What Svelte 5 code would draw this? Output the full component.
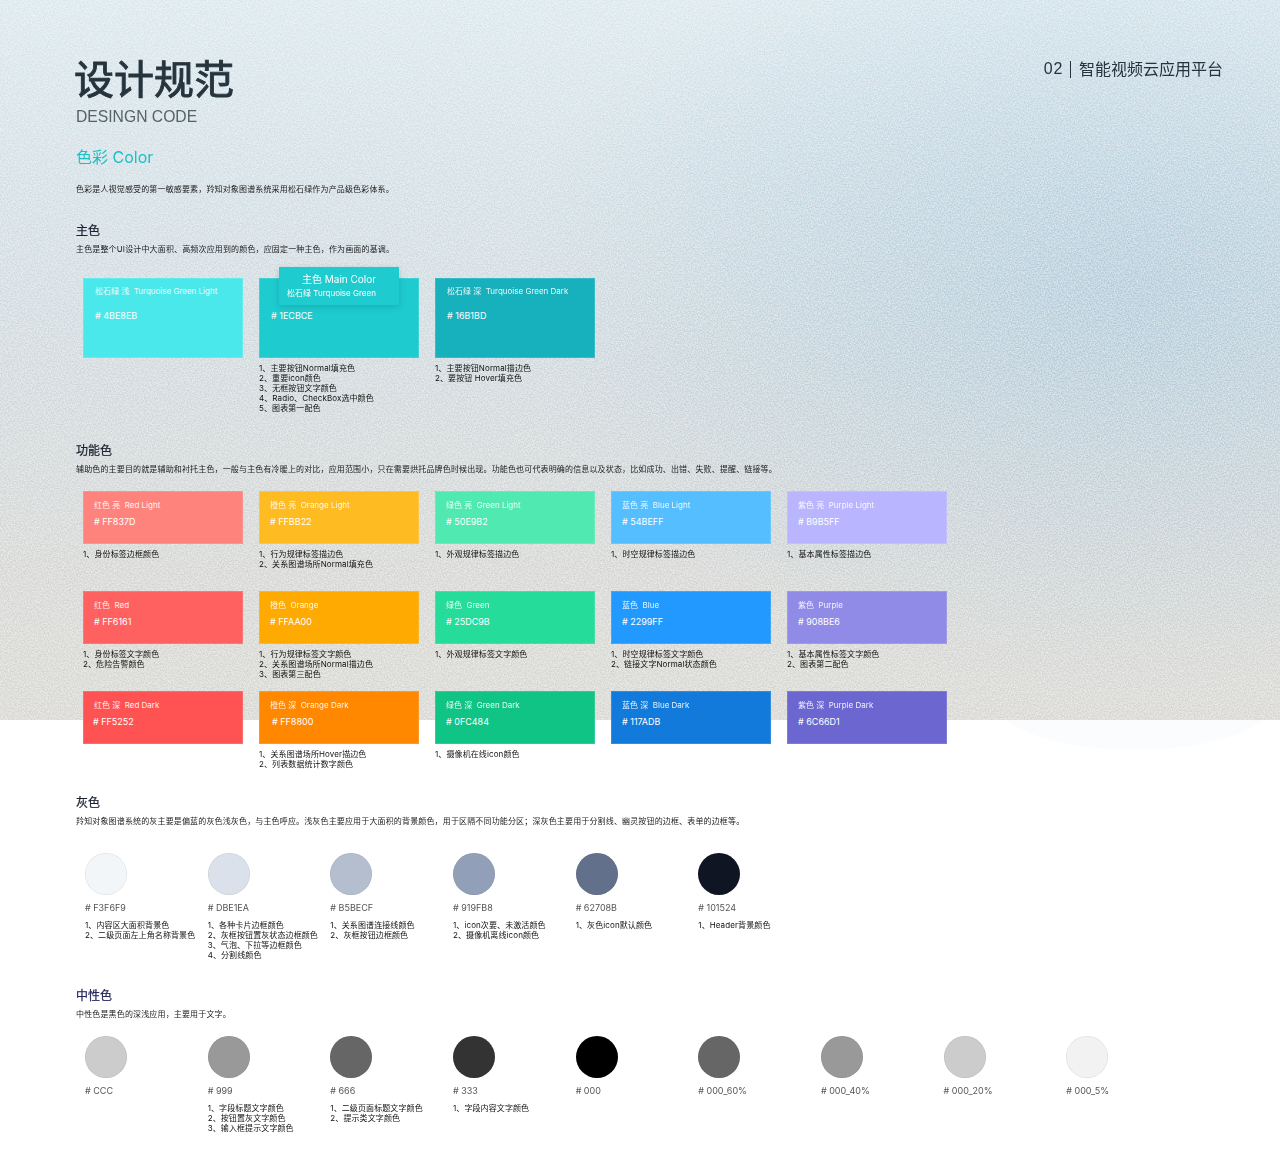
<script>
  const primary = [
    { title: '松石绿 浅  Turquoise Green Light', hex: '4BE8EB', color: '#4be8eb', notes: [] },
    { title: '', hex: '1ECBCE', color: '#1ecbce', main: true, notes: ['1、主要按钮Normal填充色', '2、重要icon颜色', '3、无框按钮文字颜色', '4、Radio、CheckBox选中颜色', '5、图表第一配色'] },
    { title: '松石绿 深  Turquoise Green Dark', hex: '16B1BD', color: '#16b1bd', notes: ['1、主要按钮Normal描边色', '2、要按钮 Hover填充色'] }
  ];

  const functional = [
    [
      { title: '红色 亮  Red Light', hex: 'FF837D', color: '#ff837d', notes: ['1、身份标签边框颜色'] },
      { title: '橙色 亮  Orange Light', hex: 'FFBB22', color: '#ffbb22', notes: ['1、行为规律标签描边色', '2、关系图谱场所Normal填充色'] },
      { title: '绿色 亮  Green Light', hex: '50E9B2', color: '#50e9b2', notes: ['1、外观规律标签描边色'] },
      { title: '蓝色 亮  Blue Light', hex: '54BEFF', color: '#54beff', notes: ['1、时空规律标签描边色'] },
      { title: '紫色 亮  Purple Light', hex: 'B9B5FF', color: '#b9b5ff', notes: ['1、基本属性标签描边色'] }
    ],
    [
      { title: '红色  Red', hex: 'FF6161', color: '#ff6161', notes: ['1、身份标签文字颜色', '2、危险告警颜色'] },
      { title: '橙色  Orange', hex: 'FFAA00', color: '#ffaa00', notes: ['1、行为规律标签文字颜色', '2、关系图谱场所Normal描边色', '3、图表第三配色'] },
      { title: '绿色  Green', hex: '25DC9B', color: '#25dc9b', notes: ['1、外观规律标签文字颜色'] },
      { title: '蓝色  Blue', hex: '2299FF', color: '#2299ff', notes: ['1、时空规律标签文字颜色', '2、链接文字Normal状态颜色'] },
      { title: '紫色  Purple', hex: '908BE6', color: '#908be6', notes: ['1、基本属性标签文字颜色', '2、图表第二配色'] }
    ],
    [
      { title: '红色 深  Red Dark', hex: 'FF5252', color: '#ff5252', shift: -1, notes: [] },
      { title: '橙色 深  Orange Dark', hex: 'FF8800', color: '#ff8800', shift: 2, notes: ['1、关系图谱场所Hover描边色', '2、列表数据统计数字颜色'] },
      { title: '绿色 深  Green Dark', hex: '0FC484', color: '#0fc484', notes: ['1、摄像机在线icon颜色'] },
      { title: '蓝色 深  Blue Dark', hex: '117ADB', color: '#117adb', notes: [] },
      { title: '紫色 深  Purple Dark', hex: '6C66D1', color: '#6c66d1', notes: [] }
    ]
  ];

  const grays = [
    { hex: 'F3F6F9', color: '#f3f6f9', notes: ['1、内容区大面积背景色', '2、二级页面左上角名称背景色'] },
    { hex: 'DBE1EA', color: '#dbe1ea', notes: ['1、各种卡片边框颜色', '2、灰框按钮置灰状态边框颜色', '3、气泡、下拉等边框颜色', '4、分割线颜色'] },
    { hex: 'B5BECF', color: '#b5becf', notes: ['1、关系图谱连接线颜色', '2、灰框按钮边框颜色'] },
    { hex: '919FB8', color: '#919fb8', notes: ['1、icon次要、未激活颜色', '2、摄像机离线icon颜色'] },
    { hex: '62708B', color: '#62708b', notes: ['1、灰色icon默认颜色'] },
    { hex: '101524', color: '#101524', notes: ['1、Header背景颜色'] }
  ];

  const neutrals = [
    { hex: 'CCC', color: '#ccc', notes: [] },
    { hex: '999', color: '#999', notes: ['1、字段标题文字颜色', '2、按钮置灰文字颜色', '3、输入框提示文字颜色'] },
    { hex: '666', color: '#666', notes: ['1、二级页面标题文字颜色', '2、提示类文字颜色'] },
    { hex: '333', color: '#333', notes: ['1、字段内容文字颜色'] },
    { hex: '000', color: '#000', notes: [] },
    { hex: '000_60%', color: '#666', notes: [] },
    { hex: '000_40%', color: '#999', notes: [] },
    { hex: '000_20%', color: '#ccc', notes: [] },
    { hex: '000_5%', color: '#f2f2f2', notes: [] }
  ];
</script>

{#snippet notes(lines)}
  <div class="notes">
    {#each lines as line}
      <div>{line}</div>
    {/each}
  </div>
{/snippet}

{#snippet swatch(item)}
  <div class="swatch">
    <div class="dot" style="background: {item.color}"></div>
    <div class="dot-hex"># {item.hex}</div>
    {@render notes(item.notes)}
  </div>
{/snippet}

<div class="page">
  <div class="glow" aria-hidden="true"></div>
  <div class="backdrop" aria-hidden="true">
    <svg class="grain" width="1280" height="720">
      <filter id="grain-noise" x="0" y="0" width="100%" height="100%" color-interpolation-filters="sRGB">
        <feTurbulence type="fractalNoise" baseFrequency="0.7" numOctaves="2" seed="7" />
        <feColorMatrix type="matrix" values="2.4 0 0 0 -0.7  2.4 0 0 0 -0.7  2.4 0 0 0 -0.7  0 0 0 0 1" />
      </filter>
      <rect width="1280" height="720" filter="url(#grain-noise)" />
    </svg>
  </div>

  <div class="content">
    <header class="top">
      <div>
        <h1>设计规范</h1>
        <div class="subtitle">DESINGN CODE</div>
      </div>
      <div class="chapter"><span>02</span><i></i>智能视频云应用平台</div>
    </header>

    <h2>色彩 Color</h2>
    <p class="intro">色彩是人视觉感受的第一敏感要素，羚知对象图谱系统采用松石绿作为产品级色彩体系。</p>

    <h3 class="first">主色</h3>
    <p class="desc">主色是整个UI设计中大面积、高频次应用到的颜色，应固定一种主色，作为画面的基调。</p>

    <div class="cards primary">
      {#each primary as c}
        <div class="cell">
          <div class="card tall" style="background: {c.color}">
            {#if c.main}
              <div class="main-tag">
                <div class="main-title">主色 Main Color</div>
                <div class="main-sub">松石绿 Turquoise Green</div>
              </div>
            {/if}
            <div class="card-title">{c.title}&nbsp;</div>
            <div class="card-hex"># {c.hex}</div>
          </div>
          {@render notes(c.notes)}
        </div>
      {/each}
    </div>

    <h3>功能色</h3>
    <p class="desc">辅助色的主要目的就是辅助和衬托主色，一般与主色有冷暖上的对比，应用范围小，只在需要烘托品牌色时候出现。功能色也可代表明确的信息以及状态，比如成功、出错、失败、提醒、链接等。</p>

    <div class="functional">
      {#each functional as row}
        <div class="cards">
          {#each row as c}
            <div class="cell">
              <div class="card" style="background: {c.color}">
                <div class="card-title">{c.title}</div>
                <div class="card-hex" style="margin-left: {c.shift ?? 0}px"># {c.hex}</div>
              </div>
              {@render notes(c.notes)}
            </div>
          {/each}
        </div>
      {/each}
    </div>

    <h3>灰色</h3>
    <p class="desc">羚知对象图谱系统的灰主要是偏蓝的灰色浅灰色，与主色呼应。浅灰色主要应用于大面积的背景颜色，用于区隔不同功能分区；深灰色主要用于分割线、幽灵按钮的边框、表单的边框等。</p>

    <div class="swatches gray-row">
      {#each grays as item}
        {@render swatch(item)}
      {/each}
    </div>

    <h3 class="fourth">中性色</h3>
    <p class="desc neutral-desc">中性色是黑色的深浅应用，主要用于文字。</p>

    <div class="swatches neutral-row">
      {#each neutrals as item}
        {@render swatch(item)}
      {/each}
    </div>
  </div>
</div>

<style>
  :global(body) {
    background: #fff;
  }

  .page {
    position: relative;
    width: 1280px;
    height: 1164px;
    overflow: hidden;
    background: #fff;
    font-family: Inter, "Noto Sans CJK SC", sans-serif;
    color: #2a2a2a;
  }

  .backdrop {
    position: absolute;
    inset: 0 0 auto 0;
    height: 720px;
    background:
      radial-gradient(ellipse 620px 400px at 1130px 290px, rgba(176, 204, 222, 0.55), rgba(176, 204, 222, 0) 100%),
      linear-gradient(180deg, #e2edf2 0%, #dce6eb 25%, #dae1e4 50%, #dedfdd 78%, #e0dfdc 100%);
  }

  .grain {
    display: block;
    opacity: 0.32;
    mix-blend-mode: overlay;
  }

  .glow {
    position: absolute;
    left: 990px;
    top: 640px;
    width: 290px;
    height: 110px;
    border-radius: 50%;
    background: #fafcfe;
  }

  .content {
    position: relative;
    padding: 58px 57px 0 76px;
  }

  .top {
    display: flex;
    justify-content: space-between;
    align-items: flex-start;
  }

  h1 {
    margin: 0 0 0 -2px;
    font-size: 40px;
    line-height: 44px;
    font-weight: 400;
    color: #26343d;
    -webkit-text-stroke: 0.9px #26343d;
  }

  .subtitle {
    margin-top: 5px;
    font-family: "Liberation Sans", sans-serif;
    font-size: 15.7px;
    line-height: 20px;
    color: #56626a;
  }

  .chapter {
    display: flex;
    align-items: center;
    margin-top: 1px;
    font-size: 16px;
    line-height: 20px;
    color: #26343d;
  }

  .chapter span {
    font-family: "Liberation Sans", sans-serif;
    letter-spacing: 0.7px;
  }

  .chapter i {
    width: 1px;
    height: 17px;
    margin: 0 8px 0 7px;
    background: #26343d;
  }

  h2 {
    margin: 19px 0 0;
    font-size: 16px;
    line-height: 22px;
    font-weight: 400;
    color: #1ebfc4;
  }

  .intro,
  .desc {
    margin: 0;
    font-size: 8px;
    line-height: 12px;
    letter-spacing: 0.15px;
    color: #222;
    white-space: nowrap;
  }

  .intro {
    margin-top: 15px;
  }

  h3 {
    margin: 0;
    padding-top: 1px;
    font-size: 12px;
    line-height: 16px;
    font-weight: 400;
    color: #1c2233;
    -webkit-text-stroke: 0.25px #1c2233;
  }

  h3.first {
    margin-top: 27px;
  }

  h3.fourth {
    color: #23275a;
    -webkit-text-stroke-color: #23275a;
  }

  .desc {
    margin-top: 4px;
  }

  .cards {
    display: flex;
    gap: 16px;
    margin-left: 7px;
  }

  .cards.primary {
    margin-top: 23px;
    height: 164px;
  }

  .functional {
    margin-top: 16px;
    height: 303px;
  }

  .functional .cards {
    height: 100px;
  }

  .cell {
    width: 160px;
  }

  .card {
    position: relative;
    box-sizing: border-box;
    height: 53px;
    padding: 8px 11px 0;
    color: #fff;
    box-shadow: inset 0 0 0 1px rgba(255, 255, 255, 0.14);
  }

  .card.tall {
    height: 80px;
    padding: 7px 12px 0;
  }

  .card-title {
    font-size: 8px;
    line-height: 12px;
    opacity: 0.9;
    white-space: pre;
  }

  .card-hex {
    margin-top: 4px;
    font-size: 9px;
    line-height: 14px;
  }

  .tall .card-hex {
    margin-top: 12px;
  }

  .main-tag {
    position: absolute;
    left: 20px;
    top: -11px;
    width: 120px;
    height: 38px;
    padding-top: 6px;
    box-sizing: border-box;
    text-align: center;
    background: #1ecbce;
    box-shadow: 0 2px 6px rgba(0, 80, 90, 0.22);
  }

  .main-title {
    font-size: 10px;
    line-height: 13px;
  }

  .main-sub {
    margin-top: 2px;
    padding-right: 15px;
    font-size: 8px;
    line-height: 11px;
  }

  .notes {
    margin-top: 5px;
    font-size: 8px;
    line-height: 10px;
    letter-spacing: 0.1px;
    color: #111;
    white-space: nowrap;
  }

  .swatches {
    display: grid;
    grid-template-columns: repeat(9, 122.67px);
    margin-left: 9px;
  }

  .gray-row {
    margin-top: 26px;
    height: 134px;
  }

  .neutral-row {
    margin-top: 16px;
  }

  .dot {
    width: 42px;
    height: 42px;
    border-radius: 50%;
    box-shadow: inset 0 0 0 0.5px rgba(0, 0, 0, 0.1);
  }

  .dot-hex {
    margin-top: 7px;
    font-size: 9px;
    line-height: 12px;
    color: #555;
  }

  .swatch .notes {
    margin-top: 6px;
  }
</style>
